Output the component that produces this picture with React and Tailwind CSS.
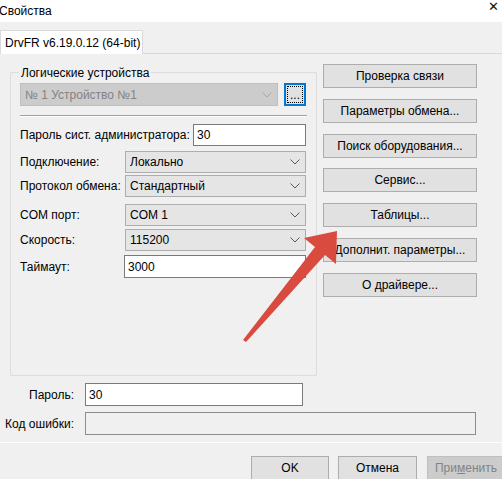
import React from "react";

function Chevron({ color = "#5a5a5a" }) {
  return (
    <svg width="10" height="6" viewBox="0 0 10 6" className="shrink-0">
      <polyline points="0.5,0.5 5,5 9.5,0.5" fill="none" stroke={color} strokeWidth="1" />
    </svg>
  );
}

function Select({ value, className }) {
  return (
    <div className={"flex items-center justify-between bg-[#e5e5e5] border border-[#adadad] pl-[4px] pr-[5px] " + className}>
      <span>{value}</span>
      <Chevron />
    </div>
  );
}

function Input({ value, className }) {
  return (
    <div className={"flex items-center bg-white border border-[#7a7a7a] pl-[3px] " + className}>
      <span>{value}</span>
    </div>
  );
}

function Btn({ children, className }) {
  return (
    <div className={"flex items-center justify-center bg-[#e1e1e1] border border-[#adadad] " + className}>
      {children}
    </div>
  );
}

export default function App() {
  return (
    <div className="relative w-[502px] h-[479px] overflow-hidden bg-[#f0f0f0] text-[12px] leading-[14px] text-black font-['Liberation_Sans',Arial,sans-serif] flex flex-col">
      {/* title bar */}
      <div className="h-[22px] w-[502px] shrink-0 bg-white flex items-start justify-between">
        <span className="text-[12px] -ml-[1px] mt-[4px]">Свойства</span>
        <span className="mt-0 mr-[3px] text-[13px] leading-[13px] text-[#111] font-['DejaVu_Sans',sans-serif]">✕</span>
      </div>

      <div className="h-[8px] shrink-0" />

      {/* tab row */}
      <div className="h-[23px] shrink-0 flex">
        <div className="w-[143px] h-[24px] bg-white border-l border-t border-r border-[#d9d9d9] flex items-center pl-[4px] relative z-10">
          DrvFR v6.19.0.12 (64-bit)
        </div>
      </div>

      {/* tab page */}
      <div className="h-[390px] shrink-0 border-t border-b border-t-[#d9d9d9] border-b-white flex flex-col">
        <div className="flex items-start pl-[10px] pt-[10px]">
          {/* group box */}
          <div className="relative mt-[8px] w-[307px] h-[304px] border border-[#dcdcdc] rounded-[2px] pl-[9px] pt-[10px] flex flex-col">
            <span className="absolute left-[8px] -top-[7px] bg-[#f0f0f0] px-[2px]">Логические устройства</span>

            <div className="flex h-[23px]">
              <div className="w-[258px] h-[23px] flex items-center justify-between bg-[#cccccc] border border-[#bfbfbf] pl-[4px] pr-[5px] text-[#838383]">
                <span>№ 1 Устройство №1</span>
                <Chevron color="#a8a8a8" />
              </div>
              <div className="ml-[6px] w-[22px] h-[23px] border-2 border-[#0078d7] bg-[#e1e1e1] p-[1px]">
                <div className="w-full h-full border border-dotted border-black flex items-end justify-center leading-[10px] pb-[2px]">
                  ...
                </div>
              </div>
            </div>

            <div className="mt-[9px] w-[287px] h-[2px] border-t border-b border-t-[#a0a0a0] border-b-white" />

            <div className="mt-[7px] flex items-center h-[22px]">
              <span className="w-[173px] shrink-0">Пароль сист. администратора:</span>
              <Input value="30" className="w-[113px] h-[22px]" />
            </div>

            <div className="mt-[5px] flex items-center h-[22px]">
              <span className="w-[105px] shrink-0">Подключение:</span>
              <Select value="Локально" className="w-[181px] h-[22px]" />
            </div>

            <div className="mt-[2px] flex items-center h-[22px]">
              <span className="w-[105px] shrink-0">Протокол обмена:</span>
              <Select value="Стандартный" className="w-[181px] h-[22px]" />
            </div>

            <div className="mt-[7px] flex items-center h-[22px]">
              <span className="w-[105px] shrink-0">COM порт:</span>
              <Select value="COM 1" className="w-[181px] h-[22px]" />
            </div>

            <div className="mt-[3px] flex items-center h-[22px]">
              <span className="w-[105px] shrink-0">Скорость:</span>
              <Select value="115200" className="w-[181px] h-[22px]" />
            </div>

            <div className="mt-[4px] flex items-center h-[23px]">
              <span className="w-[104px] shrink-0">Таймаут:</span>
              <Input value="3000" className="w-[182px] h-[23px]" />
            </div>
          </div>

          {/* right buttons */}
          <div className="ml-[6px] flex flex-col">
            <Btn className="w-[154px] h-[24px]">Проверка связи</Btn>
            <Btn className="mt-[11px] w-[154px] h-[24px]">Параметры обмена...</Btn>
            <Btn className="mt-[11px] w-[154px] h-[24px]">Поиск оборудования...</Btn>
            <Btn className="mt-[10px] w-[154px] h-[24px]">Сервис...</Btn>
            <Btn className="mt-[11px] w-[154px] h-[24px]">Таблицы...</Btn>
            <Btn className="mt-[11px] w-[154px] h-[24px]">Дополнит. параметры...</Btn>
            <Btn className="mt-[11px] w-[154px] h-[24px]">О драйвере...</Btn>
          </div>
        </div>

        <div className="mt-[7px] flex items-center h-[23px]">
          <span className="w-[74px] text-right shrink-0">Пароль:</span>
          <Input value="30" className="ml-[11px] w-[218px] h-[23px]" />
        </div>
        <div className="mt-[6px] flex items-center h-[23px]">
          <span className="w-[74px] text-right shrink-0">Код ошибки:</span>
          <div className="ml-[11px] w-[391px] h-[23px] border border-[#8c8c8c] bg-[#f0f0f0]" />
        </div>
      </div>

      {/* dialog buttons */}
      <div className="mt-[13px] flex shrink-0">
        <Btn className="ml-[251px] w-[78px] h-[24px] shrink-0">OK</Btn>
        <Btn className="ml-[9px] w-[79px] h-[24px] shrink-0">Отмена</Btn>
        <div className="ml-[10px] w-[78px] h-[24px] shrink-0 flex items-center justify-center bg-[#cccccc] border border-[#bfbfbf] text-[#838383]">
          <span>
            При<span className="underline">м</span>енить
          </span>
        </div>
      </div>

      {/* red arrow overlay */}
      <svg className="absolute inset-0 pointer-events-none" width="502" height="479" viewBox="0 0 502 479">
        <polygon
          points="243,340 315,247 304,238 337,231 336,264 325,255 246,342"
          fill="#d94b3f"
        />
      </svg>
    </div>
  );
}
